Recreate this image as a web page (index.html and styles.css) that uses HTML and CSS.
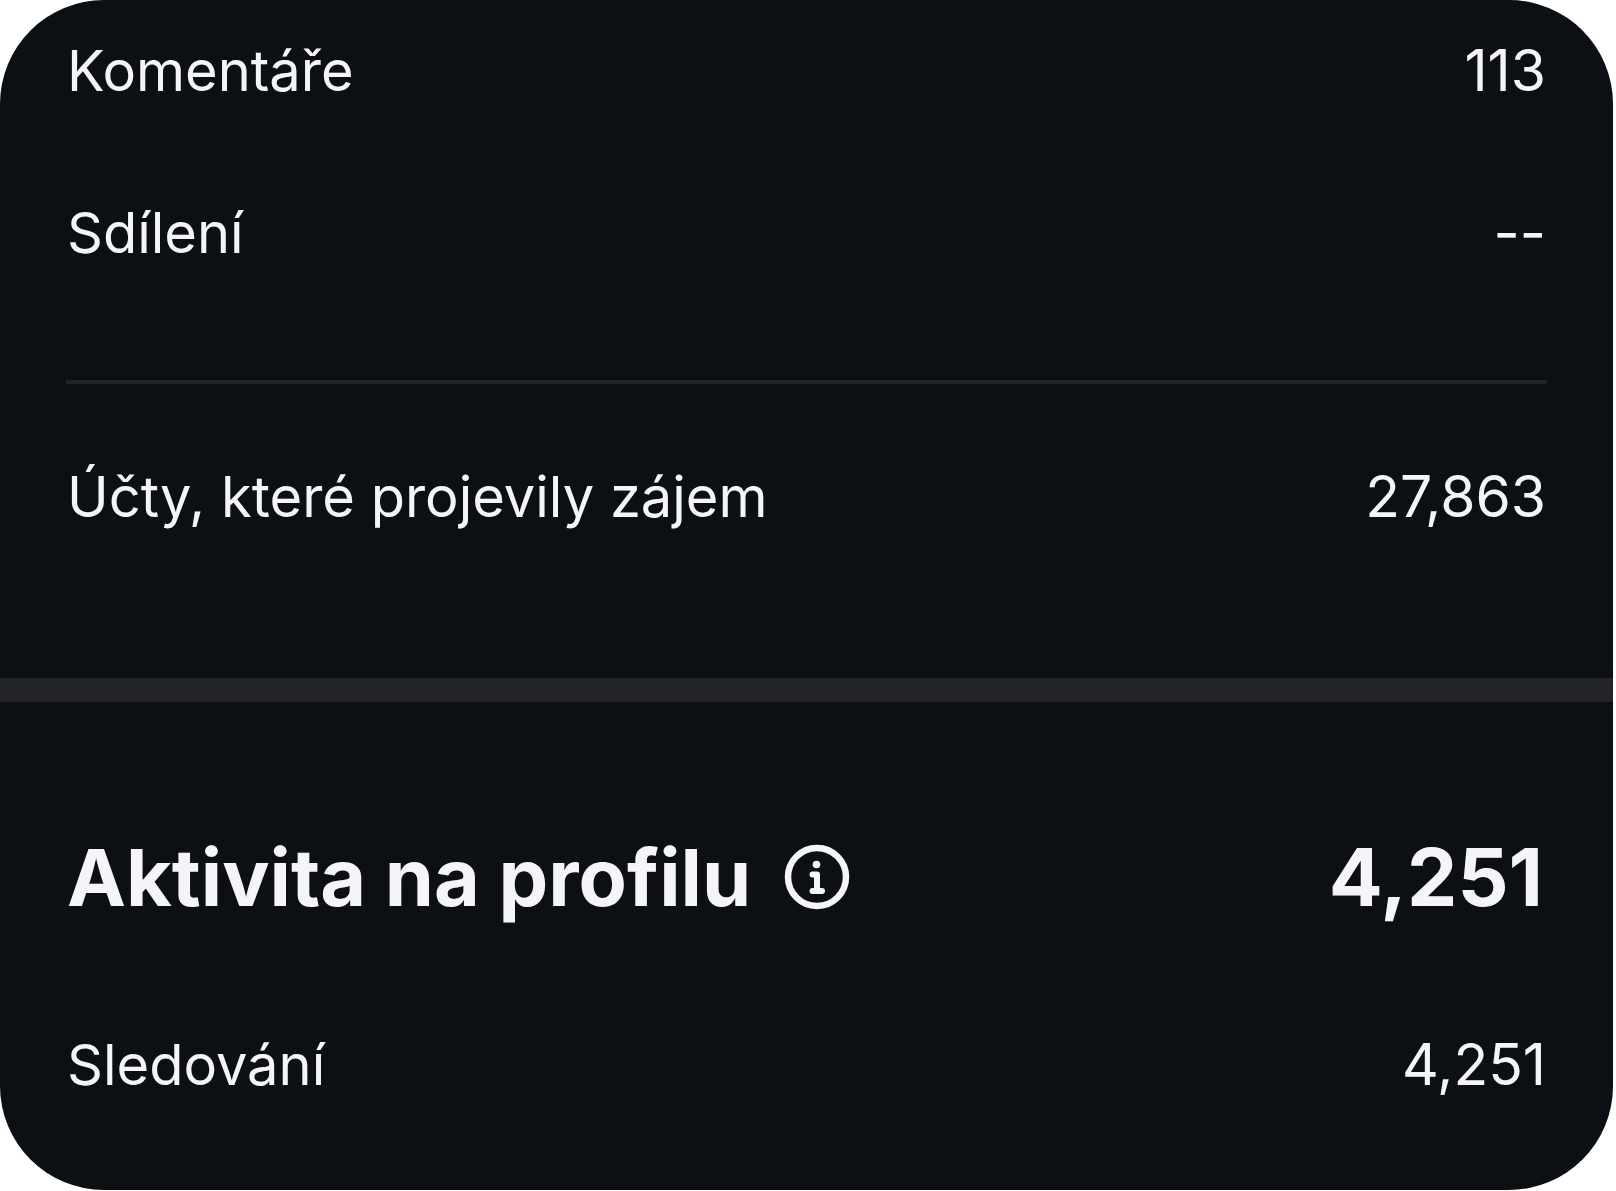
FILE: index.html
```html
<!DOCTYPE html>
<html lang="cs">
<head>
<meta charset="utf-8">
<meta name="viewport" content="width=device-width, initial-scale=1">
<title>Aktivita na profilu</title>
<link rel="stylesheet" href="styles.css">
</head>
<body>
<main class="card">
  <section class="interactions">
    <dl class="list">
      <div class="row"><dt>Komentáře</dt><dd>113</dd></div>
      <div class="row"><dt>Sdílení</dt><dd>--</dd></div>
    </dl>
    <hr class="rule">
    <dl class="list">
      <div class="row"><dt>Účty, které projevily zájem</dt><dd>27,863</dd></div>
    </dl>
  </section>
  <section class="activity">
    <header class="heading">
      <h2 class="title">Aktivita na profilu</h2>
      <button class="info" type="button" aria-label="Informace">
        <svg viewBox="0 0 66 66" width="66" height="66" aria-hidden="true">
          <circle cx="33" cy="33" r="29" fill="none" stroke="currentColor" stroke-width="6.5"/>
          <circle cx="32.5" cy="20.5" r="3.8" fill="currentColor"/>
          <path d="M28.5 30.5H33V47M28.5 47H38" fill="none" stroke="currentColor" stroke-width="6" stroke-linecap="round" stroke-linejoin="round"/>
        </svg>
      </button>
      <span class="total">4,251</span>
    </header>
    <dl class="list">
      <div class="row"><dt>Sledování</dt><dd>4,251</dd></div>
    </dl>
  </section>
</main>
</body>
</html>
```

FILE: styles.css
```css
* {
  box-sizing: border-box;
}

body {
  margin: 0;
  background: #fff;
  color: #f5f5f7;
  font-family: Inter, "Liberation Sans", sans-serif;
  font-size: 56px;
  line-height: 72px;
}

.card {
  margin-right: 3px;
  overflow: hidden;
  border-radius: 104px;
  background: #0c1014;
}

.interactions {
  padding: 35px 66px 145px;
  border-bottom: 24px solid #232428;
}

.list {
  display: grid;
  gap: 90px;
  margin: 0;
}

.row {
  display: flex;
  justify-content: space-between;
}

.row dt {
  padding-left: 1px;
}

.row dd {
  margin: 0;
  padding-right: 1px;
  font-size: 57px;
}

.rule {
  height: 4px;
  margin: 111px 0 77px;
  border: 0;
  background: #232428;
}

.activity {
  padding: 127px 66px 89px;
}

.heading {
  display: flex;
  align-items: center;
  margin-bottom: 104px;
  font-size: 80px;
  font-weight: 700;
  line-height: 96px;
}

.title {
  margin: 0;
  padding-left: 1px;
  font-size: 79px;
}

.info {
  display: flex;
  margin-left: 33px;
  padding: 0;
  border: 0;
  background: none;
  color: inherit;
}

.total {
  margin-left: auto;
  padding-right: 4px;
}
```
